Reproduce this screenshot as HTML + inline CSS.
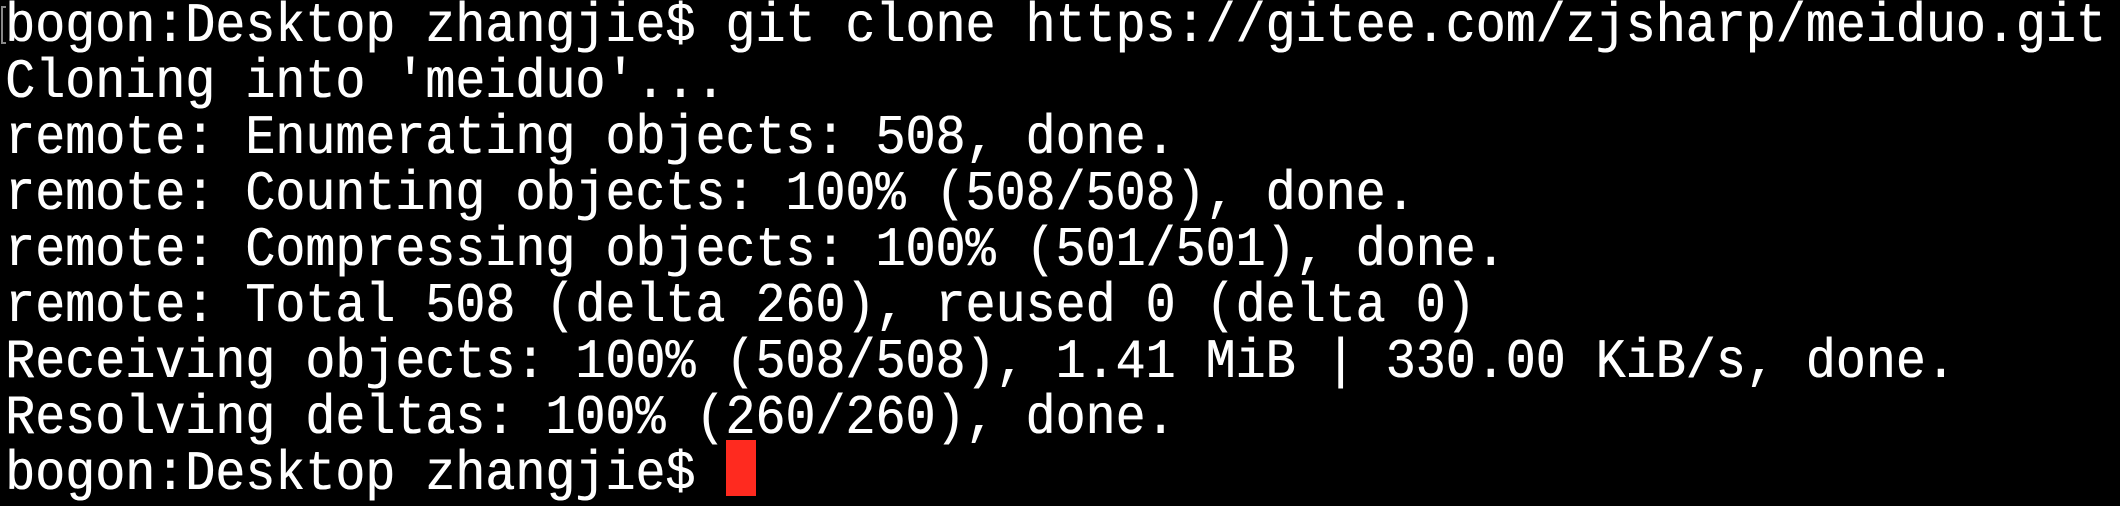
<!DOCTYPE html>
<html><head><meta charset="utf-8"><style>
html,body{margin:0;padding:0;background:#000;width:2120px;height:502px;overflow:hidden;}
pre{position:absolute;left:5px;top:-2px;margin:0;font-family:"Liberation Mono","DejaVu Sans Mono",monospace;font-size:56px;line-height:56px;color:#fff;letter-spacing:0;transform:scaleX(0.893);transform-origin:0 0;text-shadow:0.6px 0 0 #fff;}
.cur{position:absolute;left:726px;top:440px;width:30px;height:56px;background:#ff2a1f;}
.br{position:absolute;left:1px;top:6px;width:3px;height:34px;border:2px solid #888;border-right:none;}
</style></head><body>
<div class="br"></div>
<pre>bogon:Desktop zhangjie$ git clone https://gitee.com/zjsharp/meiduo.git
Cloning into 'meiduo'...
remote: Enumerating objects: 508, done.
remote: Counting objects: 100% (508/508), done.
remote: Compressing objects: 100% (501/501), done.
remote: Total 508 (delta 260), reused 0 (delta 0)
Receiving objects: 100% (508/508), 1.41 MiB | 330.00 KiB/s, done.
Resolving deltas: 100% (260/260), done.
bogon:Desktop zhangjie$ </pre>
<div class="cur"></div>
</body></html>
